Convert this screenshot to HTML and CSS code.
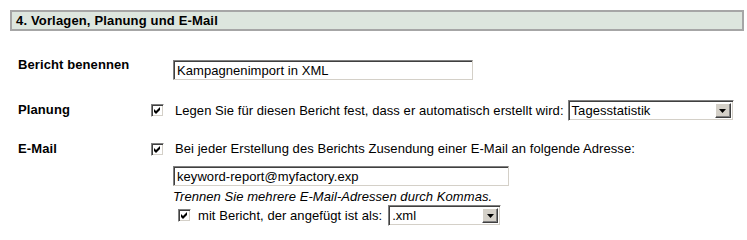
FILE: index.html
```html
<!DOCTYPE html>
<html lang="de">
<head>
<meta charset="utf-8">
<link rel="stylesheet" href="styles.css">
</head>
<body>
<div class="section">
  <div class="section-head">4. Vorlagen, Planung und E-Mail</div>
  <div class="form">
    <div class="row row-name">
      <div class="label">Bericht benennen</div>
      <div class="field indent">
        <span class="textbox tb-name">Kampagnenimport in XML</span>
      </div>
    </div>
    <div class="row row-plan">
      <div class="label">Planung</div>
      <div class="field">
        <div class="line">
          <span class="check"><svg viewBox="0 0 9 9" width="9" height="9"><path d="M1 3 L3 5 L7 1 L7 4 L3 8 L1 6 Z" fill="#000"/></svg></span>
          <span class="text">Legen Sie für diesen Bericht fest, dass er automatisch erstellt wird:</span>
          <span class="select sel-plan"><span class="sel-val">Tagesstatistik</span><span class="sel-btn"><svg viewBox="0 0 7 4" width="7" height="4"><path d="M0 0 H7 L3.5 4 Z" fill="#000"/></svg></span></span>
        </div>
      </div>
    </div>
    <div class="row row-mail">
      <div class="label">E-Mail</div>
      <div class="field">
        <div class="line">
          <span class="check"><svg viewBox="0 0 9 9" width="9" height="9"><path d="M1 3 L3 5 L7 1 L7 4 L3 8 L1 6 Z" fill="#000"/></svg></span>
          <span class="text">Bei jeder Erstellung des Berichts Zusendung einer E-Mail an folgende Adresse:</span>
        </div>
        <div class="indent sub">
          <span class="textbox tb-mail">keyword-report@myfactory.exp</span>
          <div class="hint">Trennen Sie mehrere E-Mail-Adressen durch Kommas.</div>
          <div class="line attach">
            <span class="check"><svg viewBox="0 0 9 9" width="9" height="9"><path d="M1 3 L3 5 L7 1 L7 4 L3 8 L1 6 Z" fill="#000"/></svg></span>
            <span class="text">mit Bericht, der angefügt ist als:</span>
            <span class="select sel-xml"><span class="sel-val">.xml</span><span class="sel-btn"><svg viewBox="0 0 7 4" width="7" height="4"><path d="M0 0 H7 L3.5 4 Z" fill="#000"/></svg></span></span>
          </div>
        </div>
      </div>
    </div>
  </div>
</div>
</body>
</html>
```

FILE: styles.css
```css
html, body {
  margin: 0;
  padding: 0;
  background: #fff;
}
body {
  padding: 10px 7px 0 10px;
  font-family: "Liberation Sans", Arial, sans-serif;
  font-size: 13px;
  letter-spacing: 0.06px;
  color: #000;
}
.section-head {
  width: 726px;
  height: 17px;
  border: 2px solid #a6a6a6;
  background: #dde6de;
  font-weight: bold;
  letter-spacing: 0.16px;
  line-height: 17px;
  padding-left: 4px;
  box-sizing: content-box;
}
.form {
  padding-left: 8px;
}
.row {
  display: flex;
  align-items: flex-start;
}
.label {
  width: 133px;
  flex: none;
  font-weight: bold;
  line-height: 16px;
  letter-spacing: 0.1px;
}
.row-name { margin-top: 26px; }
.row-plan { margin-top: 20px; }
.row-plan .label { padding-top: 2px; }
.row-mail { margin-top: 20px; }
.field {
  display: flex;
  flex-direction: column;
}
.indent {
  padding-left: 22px;
}
.textbox {
  display: block;
  height: 20px;
  box-sizing: border-box;
  border: 1px solid;
  border-color: #808080 #d4d0c8 #d4d0c8 #808080;
  box-shadow: inset 1px 1px 0 #404040;
  padding: 2px 0 0 3px;
  line-height: 15px;
  background: #fff;
  white-space: nowrap;
}
.tb-name { width: 300px; margin-top: 3px; }
.tb-mail { width: 336px; }
.line {
  display: flex;
  align-items: center;
  white-space: nowrap;
}
.check {
  width: 13px;
  height: 13px;
  box-sizing: border-box;
  border: 1px solid;
  border-color: #808080 #fff #fff #808080;
  box-shadow: inset 1px 1px 0 #404040, inset -1px -1px 0 #d4d0c8;
  background: #fff;
  display: inline-flex;
  align-items: center;
  justify-content: center;
  flex: none;
}
.check svg { display: block; }
.text {
  margin-left: 11px;
  line-height: 16px;
}
.select {
  display: inline-flex;
  align-items: stretch;
  height: 21px;
  box-sizing: border-box;
  border: 1px solid;
  border-color: #808080 #fff #fff #808080;
  box-shadow: inset 1px 1px 0 #404040, inset -1px -1px 0 #d4d0c8;
  padding: 2px;
  background: #fff;
  margin-left: 4px;
}
.sel-val {
  flex: 1;
  line-height: 15px;
  padding-left: 1px;
}
.sel-btn {
  width: 16px;
  flex: none;
  background: #d4d0c8;
  box-sizing: border-box;
  border: 1px solid;
  border-color: #fff #404040 #404040 #fff;
  box-shadow: inset -1px -1px 0 #808080;
  display: flex;
  align-items: center;
  justify-content: center;
}
.sel-plan { width: 166px; }
.sel-xml { width: 113px; margin-left: 6px; }
.sub { margin-top: 9px; }
.hint {
  font-style: italic;
  line-height: 16px;
  margin-top: 3px;
  color: #000;
}
.attach { margin-top: 0; padding-left: 5px; }
.attach .text { margin-left: 7px; }
```
